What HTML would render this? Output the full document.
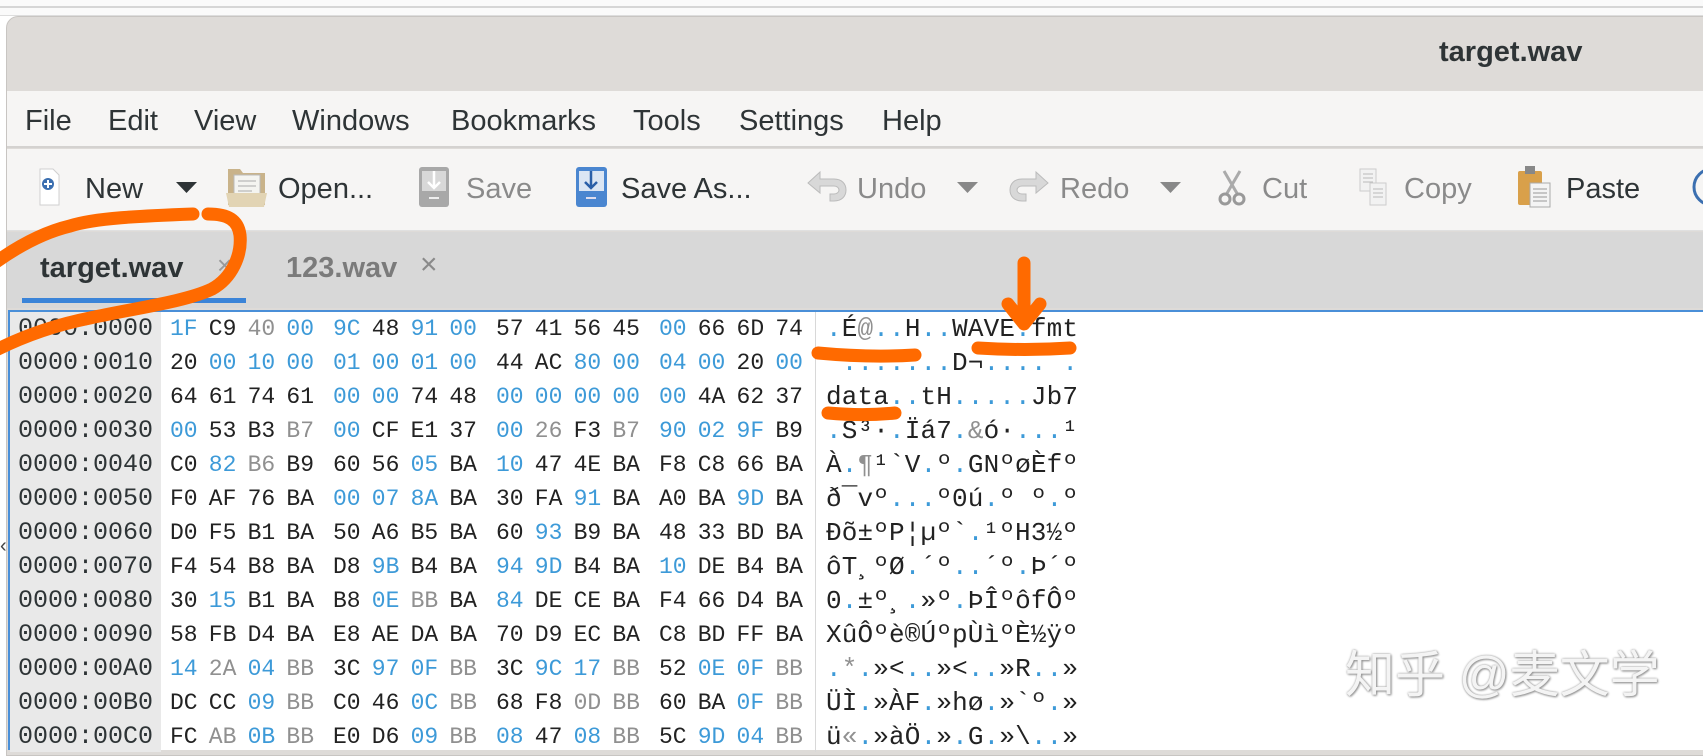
<!DOCTYPE html>
<html><head><meta charset="utf-8"><style>
*{margin:0;padding:0;box-sizing:border-box}
body{width:1703px;height:746px;overflow:hidden;background:#fff;position:relative;font-family:"Liberation Sans",sans-serif;color:#2e3436}
.a{position:absolute;white-space:pre}
.m{font-size:29px;line-height:32px;color:#2e3436}
.tb{font-size:29px;line-height:32px}
.dis{color:#8a8a8a}
.row{position:absolute;left:0;height:34px;line-height:34px;white-space:pre}
.off{position:absolute;left:18px;font-family:"Liberation Mono",monospace;font-size:25px;color:#2e3436}
.hex{position:absolute;left:170px;font-family:"Liberation Mono",monospace;font-size:23px;color:#222}
.hex span{display:inline-block;width:38.8px}
.hex span.e{margin-right:7.8px}
.b{color:#3d9ad8}.g{color:#909090}
.asc{position:absolute;left:826px;font-family:"Liberation Mono",monospace;font-size:26px;color:#222;letter-spacing:0.15px}
.asc i{font-style:normal;color:#3d9ad8}
</style></head><body>
<!-- top strip -->
<div class="a" style="left:0;top:0;width:1703px;height:16px;background:#fafafa;border-bottom:1px solid #ddd"></div>
<div class="a" style="left:0;top:6px;width:1703px;height:2px;background:#d6d6d6"></div>
<!-- window -->
<div class="a" style="left:6px;top:16px;width:1710px;height:740px;background:#dedbd8;border:1px solid #c8c5c2;border-radius:12px 0 0 0"></div>
<div class="a" style="left:1439px;top:36px;font-size:29px;font-weight:bold;line-height:32px;color:#2e3436">target.wav</div>
<!-- menu -->
<div class="a" style="left:7px;top:91px;width:1700px;height:57px;background:#f6f5f4;border-bottom:2px solid #d4d2d0"></div>
<div class="a m" style="left:25px;top:105px">File</div>
<div class="a m" style="left:108px;top:105px">Edit</div>
<div class="a m" style="left:194px;top:105px">View</div>
<div class="a m" style="left:292px;top:105px">Windows</div>
<div class="a m" style="left:451px;top:105px">Bookmarks</div>
<div class="a m" style="left:633px;top:105px">Tools</div>
<div class="a m" style="left:739px;top:105px">Settings</div>
<div class="a m" style="left:882px;top:105px">Help</div>
<!-- toolbar -->
<div class="a" style="left:7px;top:149px;width:1700px;height:82px;background:#f6f5f4;border-bottom:1px solid #e0e0e0"></div>
<svg class="a" style="left:0;top:149px" width="1703" height="82">
 <!-- new -->
 <path d="M40 20h13l6 6v30h-19z" fill="#fff" stroke="#d0d0d0"/>
 <circle cx="48" cy="35" r="6" fill="#3b6fb0"/><path d="M48 31v8M44 35h8" stroke="#fff" stroke-width="2"/>
 <path d="M176 33h21l-10.5 11z" fill="#2e3436"/>
 <!-- open -->
 <path d="M228 20h12l3 4h22v32h-37z" fill="#c9b38a"/><rect x="234" y="26" width="26" height="22" fill="#f4f4f0" stroke="#bbb"/><path d="M238 32h18M238 37h18M238 42h14" stroke="#aaa"/><path d="M226 44h41l-3 14h-35z" fill="#e2d4b4"/>
 <!-- save -->
 <rect x="419" y="18" width="30" height="40" rx="3" fill="#a8a8a8"/><rect x="422" y="22" width="24" height="20" fill="#d8d8d8"/><path d="M434 22v16M428 33l6 6 6-6" stroke="#fff" stroke-width="2.5" fill="none"/><rect x="429" y="48" width="10" height="2" fill="#eee"/>
 <!-- save as -->
 <rect x="576" y="18" width="31" height="40" rx="3" fill="#4a86d0"/><rect x="579" y="22" width="25" height="20" fill="#dbe6f4"/><path d="M591 22v16M585 33l6 6 6-6" stroke="#2a5fa8" stroke-width="2.5" fill="none"/><rect x="586" y="48" width="10" height="2" fill="#dde"/>
 <!-- undo -->
 <path d="M808 34l12-11v7h14c8 0 12 5 12 11s-4 11-12 11h-4v-7h4c3 0 5-2 5-4s-2-4-5-4h-14v7z" fill="#d8d8d8" stroke="#bbb"/>
 <path d="M957 33h21l-10.5 11z" fill="#888"/>
 <!-- redo -->
 <path d="M1048 34l-12-11v7h-14c-8 0-12 5-12 11s4 11 12 11h4v-7h-4c-3 0-5-2-5-4s2-4 5-4h14v7z" fill="#d8d8d8" stroke="#bbb"/>
 <path d="M1160 33h21l-10.5 11z" fill="#888"/>
 <!-- cut -->
 <path d="M1224 22l14 24M1240 22l-14 24" stroke="#aaa" stroke-width="3"/><circle cx="1225" cy="50" r="5" fill="none" stroke="#999" stroke-width="3"/><circle cx="1239" cy="50" r="5" fill="none" stroke="#999" stroke-width="3"/>
 <!-- copy -->
 <rect x="1360" y="20" width="16" height="22" fill="#f2f2f2" stroke="#ccc"/><rect x="1370" y="34" width="16" height="22" fill="#f2f2f2" stroke="#ccc"/><path d="M1363 25h10M1363 29h10M1363 33h10M1373 40h10M1373 44h10M1373 48h10" stroke="#bbb"/>
 <!-- paste -->
 <rect x="1518" y="22" width="24" height="34" rx="2" fill="#d9a04a"/><rect x="1525" y="17" width="10" height="8" fill="#888"/><rect x="1530" y="34" width="20" height="24" fill="#f4f4f4" stroke="#aaa"/><path d="M1533 40h14M1533 44h14M1533 48h14M1533 52h14" stroke="#999"/>
 <circle cx="1712" cy="38" r="18" fill="none" stroke="#3b6fb0" stroke-width="3"/>
</svg>
<div class="a tb" style="left:85px;top:173px">New</div>
<div class="a tb" style="left:278px;top:173px">Open...</div>
<div class="a tb dis" style="left:466px;top:173px">Save</div>
<div class="a tb" style="left:621px;top:173px">Save As...</div>
<div class="a tb dis" style="left:857px;top:173px">Undo</div>
<div class="a tb dis" style="left:1060px;top:173px">Redo</div>
<div class="a tb dis" style="left:1262px;top:173px">Cut</div>
<div class="a tb dis" style="left:1404px;top:173px">Copy</div>
<div class="a tb" style="left:1566px;top:173px">Paste</div>
<!-- tabs -->
<div class="a" style="left:7px;top:232px;width:1700px;height:76px;background:#d8d8d8"></div>
<div class="a" style="left:40px;top:252px;font-size:29px;font-weight:bold;line-height:32px;color:#2e3436">target.wav</div>
<div class="a" style="left:217px;top:250px;font-size:26px;color:#999">×</div>
<div class="a" style="left:286px;top:252px;font-size:29px;font-weight:bold;line-height:32px;color:#7b7b7b">123.wav</div>
<div class="a" style="left:420px;top:248px;font-size:30px;color:#8a8a8a">×</div>
<div class="a" style="left:22px;top:298px;width:224px;height:5px;background:#3b84d8"></div>
<!-- hex area -->
<div class="a" style="left:8px;top:310px;width:1700px;height:440px;background:#fff;border-top:2px solid #4a8fd8;border-left:2px solid #4a8fd8"></div>
<div class="a" style="left:10px;top:312px;width:151px;height:440px;background:#e9e9e9"></div>
<div class="a" style="left:815px;top:312px;width:1px;height:440px;background:#d8d8d8"></div>
<div class="a" style="left:0;top:535px;font-size:20px;color:#444">‹</div>

<div class="row" style="top:312px"><span class="off">0000:0000</span><span class="hex"><span class="b">1F</span><span>C9</span><span class="g">40</span><span class="b e">00</span><span class="b">9C</span><span>48</span><span class="b">91</span><span class="b e">00</span><span>57</span><span>41</span><span>56</span><span class="e">45</span><span class="b">00</span><span>66</span><span>6D</span><span>74</span></span><span class="asc"><i>.</i>É<span class="g">@</span><i>..</i>H<i>..</i>WAVE<i>.</i>fmt</span></div>
<div class="row" style="top:346px"><span class="off">0000:0010</span><span class="hex"><span>20</span><span class="b">00</span><span class="b">10</span><span class="b e">00</span><span class="b">01</span><span class="b">00</span><span class="b">01</span><span class="b e">00</span><span>44</span><span>AC</span><span class="b">80</span><span class="b e">00</span><span class="b">04</span><span class="b">00</span><span>20</span><span class="b">00</span></span><span class="asc"> <i>.......</i>D¬<i>....</i> <i>.</i></span></div>
<div class="row" style="top:380px"><span class="off">0000:0020</span><span class="hex"><span>64</span><span>61</span><span>74</span><span class="e">61</span><span class="b">00</span><span class="b">00</span><span>74</span><span class="e">48</span><span class="b">00</span><span class="b">00</span><span class="b">00</span><span class="b e">00</span><span class="b">00</span><span>4A</span><span>62</span><span>37</span></span><span class="asc">data<i>..</i>tH<i>.....</i>Jb7</span></div>
<div class="row" style="top:414px"><span class="off">0000:0030</span><span class="hex"><span class="b">00</span><span>53</span><span>B3</span><span class="g e">B7</span><span class="b">00</span><span>CF</span><span>E1</span><span class="e">37</span><span class="b">00</span><span class="g">26</span><span>F3</span><span class="g e">B7</span><span class="b">90</span><span class="b">02</span><span class="b">9F</span><span>B9</span></span><span class="asc"><i>.</i>S³·<i>.</i>Ïá7<i>.</i><span class="g">&amp;</span>ó·<i>...</i>¹</span></div>
<div class="row" style="top:448px"><span class="off">0000:0040</span><span class="hex"><span>C0</span><span class="b">82</span><span class="g">B6</span><span class="e">B9</span><span>60</span><span>56</span><span class="b">05</span><span class="e">BA</span><span class="b">10</span><span>47</span><span>4E</span><span class="e">BA</span><span>F8</span><span>C8</span><span>66</span><span>BA</span></span><span class="asc">À<i>.</i><span class="g">¶</span>¹`V<i>.</i>º<i>.</i>GNºøÈfº</span></div>
<div class="row" style="top:482px"><span class="off">0000:0050</span><span class="hex"><span>F0</span><span>AF</span><span>76</span><span class="e">BA</span><span class="b">00</span><span class="b">07</span><span class="b">8A</span><span class="e">BA</span><span>30</span><span>FA</span><span class="b">91</span><span class="e">BA</span><span>A0</span><span>BA</span><span class="b">9D</span><span>BA</span></span><span class="asc">ð¯vº<i>...</i>º0ú<i>.</i>º º<i>.</i>º</span></div>
<div class="row" style="top:516px"><span class="off">0000:0060</span><span class="hex"><span>D0</span><span>F5</span><span>B1</span><span class="e">BA</span><span>50</span><span>A6</span><span>B5</span><span class="e">BA</span><span>60</span><span class="b">93</span><span>B9</span><span class="e">BA</span><span>48</span><span>33</span><span>BD</span><span>BA</span></span><span class="asc">Ðõ±ºP¦µº`<i>.</i>¹ºH3½º</span></div>
<div class="row" style="top:550px"><span class="off">0000:0070</span><span class="hex"><span>F4</span><span>54</span><span>B8</span><span class="e">BA</span><span>D8</span><span class="b">9B</span><span>B4</span><span class="e">BA</span><span class="b">94</span><span class="b">9D</span><span>B4</span><span class="e">BA</span><span class="b">10</span><span>DE</span><span>B4</span><span>BA</span></span><span class="asc">ôT¸ºØ<i>.</i>´º<i>..</i>´º<i>.</i>Þ´º</span></div>
<div class="row" style="top:584px"><span class="off">0000:0080</span><span class="hex"><span>30</span><span class="b">15</span><span>B1</span><span class="e">BA</span><span>B8</span><span class="b">0E</span><span class="g">BB</span><span class="e">BA</span><span class="b">84</span><span>DE</span><span>CE</span><span class="e">BA</span><span>F4</span><span>66</span><span>D4</span><span>BA</span></span><span class="asc">0<i>.</i>±º¸<i>.</i>»º<i>.</i>ÞÎºôfÔº</span></div>
<div class="row" style="top:618px"><span class="off">0000:0090</span><span class="hex"><span>58</span><span>FB</span><span>D4</span><span class="e">BA</span><span>E8</span><span>AE</span><span>DA</span><span class="e">BA</span><span>70</span><span>D9</span><span>EC</span><span class="e">BA</span><span>C8</span><span>BD</span><span>FF</span><span>BA</span></span><span class="asc">XûÔºè®ÚºpÙìºÈ½ÿº</span></div>
<div class="row" style="top:652px"><span class="off">0000:00A0</span><span class="hex"><span class="b">14</span><span class="g">2A</span><span class="b">04</span><span class="g e">BB</span><span>3C</span><span class="b">97</span><span class="b">0F</span><span class="g e">BB</span><span>3C</span><span class="b">9C</span><span class="b">17</span><span class="g e">BB</span><span>52</span><span class="b">0E</span><span class="b">0F</span><span class="g">BB</span></span><span class="asc"><i>.</i><span class="g">*</span><i>.</i>»&lt;<i>..</i>»&lt;<i>..</i>»R<i>..</i>»</span></div>
<div class="row" style="top:686px"><span class="off">0000:00B0</span><span class="hex"><span>DC</span><span>CC</span><span class="b">09</span><span class="g e">BB</span><span>C0</span><span>46</span><span class="b">0C</span><span class="g e">BB</span><span>68</span><span>F8</span><span class="g">0D</span><span class="g e">BB</span><span>60</span><span>BA</span><span class="b">0F</span><span class="g">BB</span></span><span class="asc">ÜÌ<i>.</i>»ÀF<i>.</i>»hø<i>.</i>»`º<i>.</i>»</span></div>
<div class="row" style="top:720px"><span class="off">0000:00C0</span><span class="hex"><span>FC</span><span class="g">AB</span><span class="b">0B</span><span class="g e">BB</span><span>E0</span><span>D6</span><span class="b">09</span><span class="g e">BB</span><span class="b">08</span><span>47</span><span class="b">08</span><span class="g e">BB</span><span>5C</span><span class="b">9D</span><span class="b">04</span><span class="g">BB</span></span><span class="asc">ü<span class="g">«</span><i>.</i>»àÖ<i>.</i>»<i>.</i>G<i>.</i>»\<i>..</i>»</span></div>

<!-- watermark -->
<div class="a" style="left:1345px;top:645px;font-family:'Liberation Sans','Noto Sans CJK SC',sans-serif;font-size:50px;line-height:60px;color:#f4f4f4;text-shadow:0 0 2px #9a9a9a,1px 1px 2px #8a8a8a">知乎 @麦文学</div>

<!-- annotations -->
<svg class="a" style="left:0;top:0" width="1703" height="746" fill="none" stroke="#ff6a00" stroke-width="13" stroke-linecap="round" stroke-linejoin="round">
 <path d="M-4 262C20 245 45 232 70 226C95 218 140 216 193 214"/>
 <path d="M208 214C228 214 238 220 240 235C242 255 232 278 212 289C185 302 130 309 90 318C50 326 20 338 -4 350"/>
 <path d="M818 353C850 356 885 357 915 355"/>
 <path d="M978 348C1010 350 1040 350 1070 348"/>
 <path d="M828 413C850 415 875 415 895 413"/>
 <path d="M1024 263V318"/>
 <path d="M1008 304L1024 324L1040 304"/>
</svg>
</body></html>
